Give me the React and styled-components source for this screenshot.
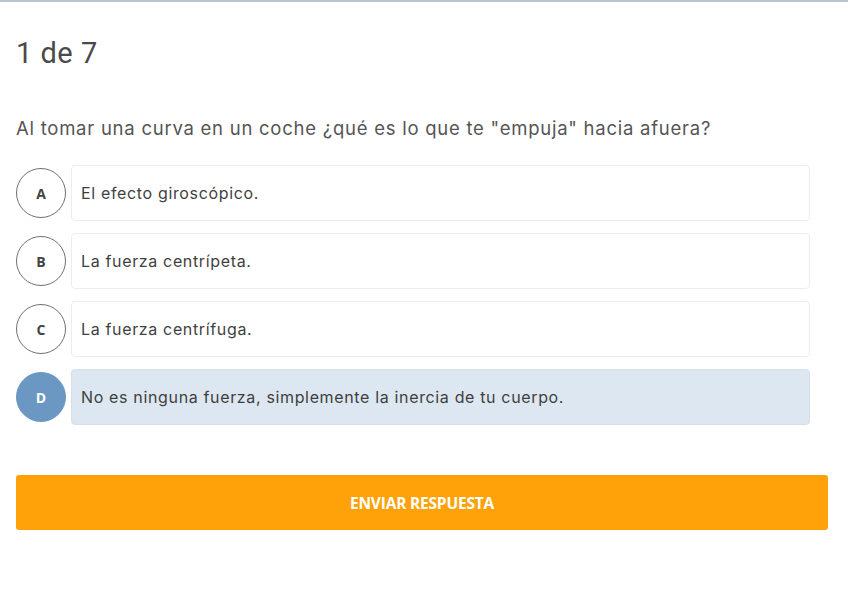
import React, { useState } from 'react';
import styled, { createGlobalStyle } from 'styled-components';

const GlobalStyle = createGlobalStyle`
  html, body {
    margin: 0;
    padding: 0;
    background: #ffffff;
  }
  body {
    font-family: Inter, "Noto Sans", sans-serif;
    -webkit-font-smoothing: antialiased;
  }
`;

const Page = styled.div`
  width: 848px;
  min-height: 593px;
  border-top: 2px solid #b9c6d2;
  box-sizing: border-box;
  padding: 34px 20px 0 16px;
`;

const Counter = styled.h1`
  margin: 0;
  font-family: Roboto, "Liberation Sans", sans-serif;
  font-weight: 400;
  font-size: 29px;
  line-height: 34px;
  color: #4a4a4a;
  letter-spacing: 0.5px;
`;

const Question = styled.p`
  margin: 46px 0 0;
  font-size: 18.5px;
  line-height: 24px;
  letter-spacing: 0.75px;
  color: #555;
`;

const Options = styled.div`
  display: flex;
  flex-direction: column;
  gap: 12px;
  margin-top: 25px;
  padding-right: 18px;
`;

const Row = styled.div`
  display: flex;
  align-items: center;
  gap: 5px;
  cursor: pointer;
`;

const Letter = styled.span`
  flex: 0 0 auto;
  width: 50px;
  height: 50px;
  box-sizing: border-box;
  border-radius: 50%;
  display: flex;
  align-items: center;
  justify-content: center;
  font-family: "Open Sans", sans-serif;
  font-weight: 700;
  font-size: 14px;
  color: ${({ $active }) => ($active ? '#ffffff' : '#444')};
  background: ${({ $active }) => ($active ? '#6a98c3' : '#ffffff')};
  border: 1.5px solid ${({ $active }) => ($active ? '#6a98c3' : '#6f6f6f')};
`;

const Box = styled.div`
  flex: 1;
  height: 56px;
  box-sizing: border-box;
  display: flex;
  align-items: center;
  padding: 0 9px;
  border-radius: 4px;
  border: 1.5px solid ${({ $active }) => ($active ? '#d5e0ea' : '#eaeef2')};
  background: ${({ $active }) => ($active ? '#dce7f1' : '#ffffff')};
  font-size: 16px;
  letter-spacing: 0.65px;
  color: #3f3f3f;
`;

const Submit = styled.button`
  display: block;
  width: 812px;
  height: 55px;
  margin-top: 50px;
  border: none;
  border-radius: 3px;
  background: #ffa20a;
  color: #ffffff;
  font-family: "Open Sans", sans-serif;
  font-weight: 700;
  font-size: 15.5px;
  letter-spacing: -0.2px;
  cursor: pointer;
`;

const answers = [
  { key: 'A', text: 'El efecto giroscópico.' },
  { key: 'B', text: 'La fuerza centrípeta.' },
  { key: 'C', text: 'La fuerza centrífuga.' },
  { key: 'D', text: 'No es ninguna fuerza, simplemente la inercia de tu cuerpo.' },
];

const App = () => {
  const [selected, setSelected] = useState('D');

  return (
    <>
      <GlobalStyle />
      <Page>
        <Counter>1 de 7</Counter>
        <Question>
          Al tomar una curva en un coche ¿qué es lo que te "empuja" hacia afuera?
        </Question>
        <Options>
          {answers.map((a) => (
            <Row key={a.key} onClick={() => setSelected(a.key)}>
              <Letter $active={selected === a.key}>{a.key}</Letter>
              <Box $active={selected === a.key}>{a.text}</Box>
            </Row>
          ))}
        </Options>
        <Submit>ENVIAR RESPUESTA</Submit>
      </Page>
    </>
  );
};

export default App;
